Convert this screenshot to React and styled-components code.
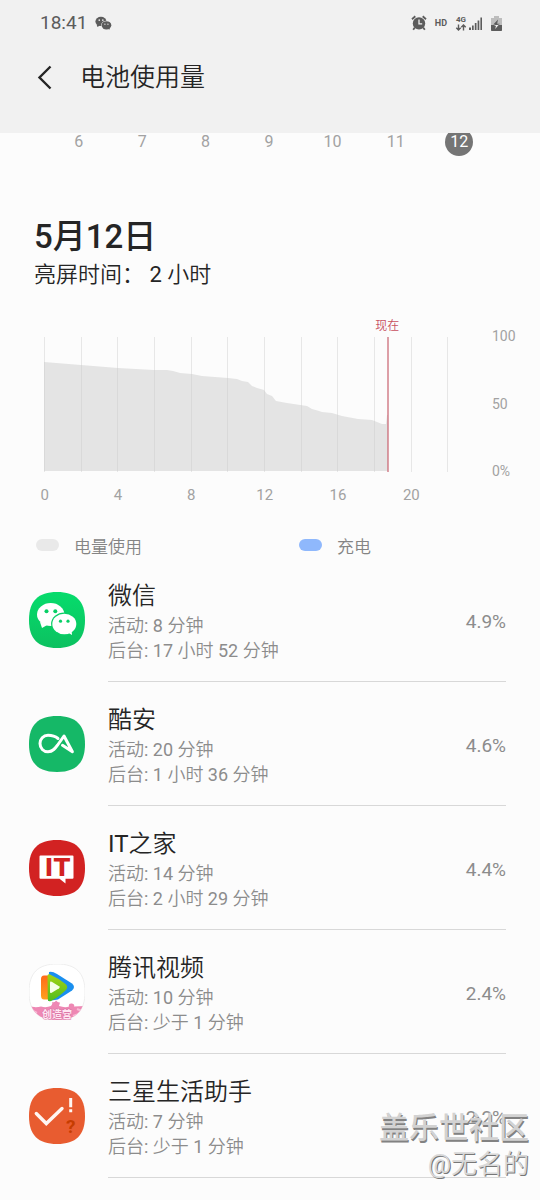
import React from 'react';
import styled, { createGlobalStyle } from 'styled-components';

const GlobalStyle = createGlobalStyle`
  body {
    margin: 0;
    background: #fcfcfc;
    color: #252525;
    font-family: Roboto, "Noto Sans CJK SC DemiLight", "Noto Sans CJK SC", sans-serif;
  }

  button {
    font-family: inherit;
    border: 0;
    padding: 0;
    background: none;
    cursor: pointer;
  }
`;

const Page = styled.div`
  position: relative;
  min-height: 100vh;
  box-sizing: border-box;
  padding-bottom: 22px;
  overflow: hidden;
`;

const Header = styled.header`
  background: #f1f1f1;
  padding-bottom: 28px;
`;

const StatusBar = styled.div`
  display: flex;
  align-items: center;
  justify-content: space-between;
  height: 46px;
  padding: 0 38px 0 40px;
  color: #5c5c5c;
`;

const StatusGroup = styled.div`
  display: flex;
  align-items: center;
  gap: ${({ gap }) => gap || '8px'};

  svg {
    display: block;
  }
`;

const Clock = styled.span`
  font-size: 19px;
  line-height: 24px;
`;

const StatusTag = styled.span`
  font-size: 9px;
  line-height: 10px;
  font-weight: 700;
`;

const NetworkTag = styled.div`
  display: flex;
  flex-direction: column;
  align-items: center;
  font-size: 8px;
  line-height: 8px;
  font-weight: 700;
`;

const TitleRow = styled.div`
  display: flex;
  align-items: center;
  height: 59px;
  padding: 4px 32px 0;
  box-sizing: border-box;
  gap: 24px;
`;

const BackButton = styled.button`
  width: 24px;
  height: 32px;

  svg {
    display: block;
  }
`;

const Title = styled.h1`
  margin: 0;
  font-size: 25px;
  line-height: 30px;
  font-weight: 400;
`;

const DayStrip = styled.nav`
  display: grid;
  grid-template-columns: repeat(7, 1fr);
  align-content: end;
  justify-items: center;
  height: 23px;
  padding: 0 49px 0 47px;
  overflow: hidden;
`;

const Day = styled.button`
  width: 28px;
  height: 28px;
  border-radius: 14px;
  font-size: 16px;
  line-height: 28px;
  color: ${({ $active }) => ($active ? '#ffffff' : '#a2a2a2')};

  && {
    background: ${({ $active }) => ($active ? '#757575' : 'none')};
  }
`;

const Summary = styled.section`
  padding: 60px 34px 0;
`;

const DateHeading = styled.h2`
  margin: 0;
  font-family: Roboto, "Noto Sans CJK SC", sans-serif;
  font-size: 33px;
  line-height: 42px;
  font-weight: 500;
`;

const ScreenTime = styled.p`
  margin: 0;
  font-size: 22px;
  line-height: 34px;
  font-weight: 400;
  white-space: pre;
`;

const ChartSection = styled.section`
  padding-top: 45px;
`;

const ChartRow = styled.div`
  display: flex;
  padding: 0 24px 0 44px;
  gap: 8px;
`;

const Plot = styled.div`
  position: relative;
  flex: 1;
  height: 135px;

  svg {
    display: block;
    width: 100%;
    height: 100%;
  }
`;

const NowLabel = styled.span`
  position: absolute;
  bottom: 100%;
  left: 78%;
  transform: translateX(-50%);
  font-size: 12px;
  line-height: 22px;
  color: #c8505f;
`;

const YAxis = styled.div`
  display: flex;
  flex-direction: column;
  justify-content: space-between;
  width: 24px;
  margin: -9px 0 -7px;
  font-size: 14px;
  line-height: 16px;
  color: #a2a2a2;
`;

const XAxis = styled.div`
  display: grid;
  grid-template-columns: repeat(6, 1fr);
  padding: 13px 92px 0 8px;
  font-size: 15px;
  line-height: 20px;
  text-align: center;
  color: #a2a2a2;
`;

const Legend = styled.div`
  display: grid;
  grid-template-columns: 263px 1fr;
  padding: 27px 36px 0;
`;

const LegendItem = styled.div`
  display: flex;
  align-items: center;
  gap: 15px;
  height: 26px;
  font-size: 17px;
  color: #848484;
`;

const Swatch = styled.span`
  width: 23px;
  height: 12px;
  border-radius: 6px;
  background: ${({ color }) => color};
`;

const AppList = styled.ul`
  list-style: none;
  margin: 0;
  padding: 0 34px 0 29px;
`;

const AppRow = styled.li`
  display: flex;
  align-items: center;
  gap: 23px;

  > svg {
    display: block;
    flex: none;
  }
`;

const AppBody = styled.div`
  flex: 1;
  display: flex;
  align-items: center;
  justify-content: space-between;
  padding: 22px 0 18px;
  border-bottom: 1px solid #d8d8d8;
`;

const AppName = styled.h3`
  margin: 0;
  font-size: 24px;
  line-height: 33px;
  font-weight: 400;
`;

const AppDetail = styled.p`
  margin: 0;
  font-size: 18px;
  line-height: 25px;
  color: #8c8c8c;
`;

const AppPercent = styled.span`
  font-size: 19px;
  line-height: 22px;
  color: #8c8c8c;
`;

const Watermark = styled.div`
  position: absolute;
  right: 11px;
  bottom: 17px;
  text-align: right;
  pointer-events: none;
  color: #d2d2d2;
  text-shadow: 1px 2px 0 #828282;
`;

const WatermarkSite = styled.div`
  font-family: "Noto Sans CJK SC", sans-serif;
  font-size: 30px;
  line-height: 40px;
  font-weight: 500;
`;

const WatermarkUser = styled.div`
  font-size: 26px;
  line-height: 38px;
  color: #d8d8d8;
  text-shadow: 1px 1px 0 #777777;
`;

const SQUIRCLE = 'M28 0C47 0 56 9 56 28S47 56 28 56 0 47 0 28 9 0 28 0Z';

const Bubbles = ({ color, hole }) => (
  <>
    <path d="M11 30L13 36L20 32Z" fill={color} />
    <ellipse cx="21.7" cy="22.5" rx="13.7" ry="11.4" fill={color} />
    <circle cx="17.5" cy="19.3" r="2" fill={hole} />
    <circle cx="26.3" cy="19.3" r="2" fill={hole} />
    <ellipse cx="35.3" cy="32" rx="13.2" ry="11.5" fill={hole} />
    <path d="M38 40L43 43L42.5 37Z" fill={color} />
    <ellipse cx="35.3" cy="32" rx="12" ry="10.3" fill={color} />
    <circle cx="31.5" cy="29.2" r="1.6" fill={hole} />
    <circle cx="39" cy="29.2" r="1.6" fill={hole} />
  </>
);

const WechatIcon = () => (
  <svg width="56" height="56" viewBox="0 0 56 56">
    <defs>
      <linearGradient id="wechat" x1="0" y1="0" x2="0" y2="1">
        <stop offset="0" stopColor="#06dc6c" />
        <stop offset="1" stopColor="#0cc160" />
      </linearGradient>
    </defs>
    <path d={SQUIRCLE} fill="url(#wechat)" />
    <Bubbles color="#ffffff" hole="#08cf66" />
  </svg>
);

const CoolapkIcon = () => (
  <svg width="56" height="56" viewBox="0 0 56 56">
    <path d={SQUIRCLE} fill="#15b867" />
    <path
      d="M29 22.5C26 20 22.5 19.3 19 19.3C14.3 19.3 11 23 11 27.5C11 32.3 14.5 35.8 19 35.8C24 35.8 26.5 32 29 28.5L35 20L43.4 35.8L33.5 29.3"
      fill="none"
      stroke="#ffffff"
      strokeWidth="3"
      strokeLinecap="round"
      strokeLinejoin="round"
    />
  </svg>
);

const ItHomeIcon = () => (
  <svg width="56" height="56" viewBox="0 0 56 56">
    <path d={SQUIRCLE} fill="#d22222" />
    <path d="M11.5 15.5H43.5Q44.5 15.5 44.5 16.5V37.7Q44.5 38.7 43.5 38.7H36.5V43.5L30.5 38.7H11.5Q10.5 38.7 10.5 37.7V16.5Q10.5 15.5 11.5 15.5Z" fill="#ffffff" />
    <text x="20 33" y="36" textAnchor="middle" fontFamily="DejaVu Sans" fontWeight="700" fontSize="24" fill="#d22222">IT</text>
  </svg>
);

const TencentVideoIcon = () => (
  <svg width="56" height="56" viewBox="0 0 56 56">
    <defs>
      <clipPath id="tencent-clip">
        <path d={SQUIRCLE} />
      </clipPath>
      <linearGradient id="tencent-green" x1="0" y1="0" x2="0" y2="1">
        <stop offset="0" stopColor="#a5d414" />
        <stop offset="1" stopColor="#4fbc1e" />
      </linearGradient>
      <linearGradient id="tencent-orange" x1="0" y1="0" x2="0" y2="1">
        <stop offset="0" stopColor="#ff6a1a" />
        <stop offset="1" stopColor="#ffa01e" />
      </linearGradient>
    </defs>
    <path d={SQUIRCLE} fill="#ffffff" stroke="#eeeeee" />
    <path d="M20 8Q23 7 28 10L43 19.5Q47 23 43 26.5L29 35.5L19 37Z" fill="#1a8fee" />
    <path d="M20 11.5H15Q12 11.5 12 15V31.5Q12 35.5 15 35.5H20Z" fill="url(#tencent-orange)" />
    <path d="M18.5 12Q18.5 9.5 21 10.5Q29 14 36.5 20Q40 23 36.5 26.5Q29 33.5 22 37Q18.8 38 18.8 35Z" fill="url(#tencent-green)" />
    <path d="M21 18.5Q21 16.8 22.7 17.8L30 22.2Q31.5 23.2 30 24.3L22.7 28.8Q21 29.6 21 28Z" fill="#f5ffe8" />
    <g clipPath="url(#tencent-clip)">
      <path d="M0 42Q6 44 12 42.5Q17 44 22 42Q24 40 23 38Q26 39 27 36.5Q29 39 31 38.5L30 42Q36 44 40 42.5Q39 39 43 39.5Q46 40 45 42.5L56 42V56H0Z" fill="#ee88b4" />
      <path d="M2 46L8 49M48 45L53 47M44 52L50 50" stroke="#f9bcd6" strokeWidth="2" />
    </g>
    <text x="28" y="53.5" textAnchor="middle" fontFamily="Noto Sans CJK SC" fontWeight="700" fontSize="10" fill="#ffe6f2" stroke="#dd78a8" strokeWidth="1" paintOrder="stroke">创造营</text>
  </svg>
);

const AssistantIcon = () => (
  <svg width="56" height="56" viewBox="0 0 56 56">
    <path d={SQUIRCLE} fill="#e85c30" />
    <path d="M7.3 25.5L17.3 35.5L33 20.5" fill="none" stroke="#fff6f2" strokeWidth="3.4" strokeLinecap="round" />
    <path d="M41.7 10V19.3M41.7 21.3V24.3" stroke="#fff6f2" strokeWidth="3" />
    <text x="41.7" y="44.8" textAnchor="middle" fontFamily="Roboto" fontWeight="700" fontSize="19" fill="#c63c00">?</text>
  </svg>
);

const AlarmIcon = () => (
  <svg width="16" height="16" viewBox="0 0 16 16">
    <path d="M1 4.2L4.3 1.3M15 4.2L11.7 1.3" stroke="#5c5c5c" strokeWidth="1.8" />
    <circle cx="8" cy="8.4" r="6.2" fill="#5c5c5c" />
    <path d="M3.8 12.5L2.2 14.8M12.2 12.5L13.8 14.8" stroke="#5c5c5c" strokeWidth="1.8" />
    <path d="M8 4.6V8.8H11.2" fill="none" stroke="#f1f1f1" strokeWidth="1.3" />
  </svg>
);

const SignalIcon = () => (
  <svg width="14" height="14" viewBox="0 0 14 14" fill="#5c5c5c">
    <path d="M0 11.5H2V14H0ZM3 9.5H4.7V14H3ZM5.8 7H7.5V14H5.8ZM8.6 4.5H10.3V14H8.6ZM11.4 1.5H13V14H11.4Z" />
  </svg>
);

const DataArrows = () => (
  <svg width="12" height="7" viewBox="0 0 12 7" fill="none" stroke="#5c5c5c" strokeWidth="1.4">
    <path d="M3.5 0.5V6M1.3 3.7L3.5 6L5.7 3.7M8.5 6.5V1M6.3 3.3L8.5 1L10.7 3.3" />
  </svg>
);

const BatteryIcon = () => (
  <svg width="11" height="15" viewBox="0 0 11 15">
    <path d="M3 0H8V2H11V15H0V2H3Z" fill="#bdbdbd" />
    <path d="M0 9H11V14Q11 15 10 15H1Q0 15 0 14Z" fill="#5c5c5c" />
    <path d="M7 3.5L2.3 8.5H4.6L3.5 9H5L4 12.8L8.8 7.7H6.2Z" fill="#5c5c5c" />
    <path d="M4.4 9H6.4L8 8.6L4.2 12.9L5 9.8H3Z" fill="#f1f1f1" />
  </svg>
);

const GRID_STEP = 440 / 12;

const LEVELS = [
  [0, 25], [37, 28], [74, 31], [110, 33], [123, 33], [129, 34], [136, 36],
  [148, 37], [158, 39], [184, 41], [193, 42], [198, 44], [204, 45], [208, 49],
  [213, 51], [220, 53], [223, 57], [228, 59], [232, 64], [243, 66], [263, 69],
  [268, 72], [275, 74], [278, 75], [288, 76], [298, 79], [314, 82], [328, 83],
  [333, 85], [338, 87], [342, 87], [343, 78], [344, 78],
];

const BatteryChart = () => (
  <svg viewBox="0 0 440 135" preserveAspectRatio="none" role="img" aria-label="电量使用">
    <path
      d={`M0 134L${LEVELS.map(([x, y]) => `${x} ${y}`).join('L')}V134Z`}
      fill="#e4e4e4"
    />
    {Array.from({ length: 12 }, (_, i) => (
      <rect key={i} x={Math.round(i * GRID_STEP)} y="0" width="1" height="135" fill="#c8c8c8" fillOpacity="0.4" />
    ))}
    <rect x="343" y="0" width="2" height="135" fill="#c8606e" fillOpacity="0.6" />
  </svg>
);

const DAYS = [6, 7, 8, 9, 10, 11, 12];
const HOURS = [0, 4, 8, 12, 16, 20];

const APPS = [
  { name: '微信', active: '8 分钟', background: '17 小时 52 分钟', percent: '4.9%', Icon: WechatIcon },
  { name: '酷安', active: '20 分钟', background: '1 小时 36 分钟', percent: '4.6%', Icon: CoolapkIcon },
  { name: 'IT之家', active: '14 分钟', background: '2 小时 29 分钟', percent: '4.4%', Icon: ItHomeIcon },
  { name: '腾讯视频', active: '10 分钟', background: '少于 1 分钟', percent: '2.4%', Icon: TencentVideoIcon },
  { name: '三星生活助手', active: '7 分钟', background: '少于 1 分钟', percent: '2.2%', Icon: AssistantIcon },
];

const AppItem = ({ app }) => (
  <AppRow>
    <app.Icon />
    <AppBody>
      <div>
        <AppName>{app.name}</AppName>
        <AppDetail>{`活动: ${app.active}`}</AppDetail>
        <AppDetail>{`后台: ${app.background}`}</AppDetail>
      </div>
      <AppPercent>{app.percent}</AppPercent>
    </AppBody>
  </AppRow>
);

const App = () => (
  <Page>
    <GlobalStyle />

    <Header>
      <StatusBar>
        <StatusGroup>
          <Clock>18:41</Clock>
          <svg width="17" height="15" viewBox="7 10 42 35">
            <Bubbles color="#5c5c5c" hole="#f1f1f1" />
          </svg>
        </StatusGroup>
        <StatusGroup>
          <AlarmIcon />
          <StatusTag>HD</StatusTag>
          <StatusGroup gap="2px">
            <NetworkTag>
              <span>4G</span>
              <DataArrows />
            </NetworkTag>
            <SignalIcon />
          </StatusGroup>
          <BatteryIcon />
        </StatusGroup>
      </StatusBar>
      <TitleRow>
        <BackButton type="button" aria-label="返回">
          <svg width="24" height="32" viewBox="0 0 24 32" fill="none" stroke="#252525" strokeWidth="2.4">
            <path d="M18.5 4.5L7.5 15.5L18.5 26.5" />
          </svg>
        </BackButton>
        <Title>电池使用量</Title>
      </TitleRow>
    </Header>

    <DayStrip>
      {DAYS.map((day) => (
        <Day key={day} type="button" $active={day === 12}>{day}</Day>
      ))}
    </DayStrip>

    <Summary>
      <DateHeading>5月12日</DateHeading>
      <ScreenTime>亮屏时间： 2 小时</ScreenTime>
    </Summary>

    <ChartSection>
      <ChartRow>
        <Plot>
          <NowLabel>现在</NowLabel>
          <BatteryChart />
        </Plot>
        <YAxis>
          <span>100</span>
          <span>50</span>
          <span>0%</span>
        </YAxis>
      </ChartRow>
      <XAxis>
        {HOURS.map((hour) => <span key={hour}>{hour}</span>)}
      </XAxis>
      <Legend>
        <LegendItem>
          <Swatch color="#e9e9e9" />
          电量使用
        </LegendItem>
        <LegendItem>
          <Swatch color="#8fb8fc" />
          充电
        </LegendItem>
      </Legend>
    </ChartSection>

    <AppList>
      {APPS.map((app) => <AppItem key={app.name} app={app} />)}
    </AppList>

    <Watermark>
      <WatermarkSite>盖乐世社区</WatermarkSite>
      <WatermarkUser>@无名的</WatermarkUser>
    </Watermark>
  </Page>
);

export default App;
